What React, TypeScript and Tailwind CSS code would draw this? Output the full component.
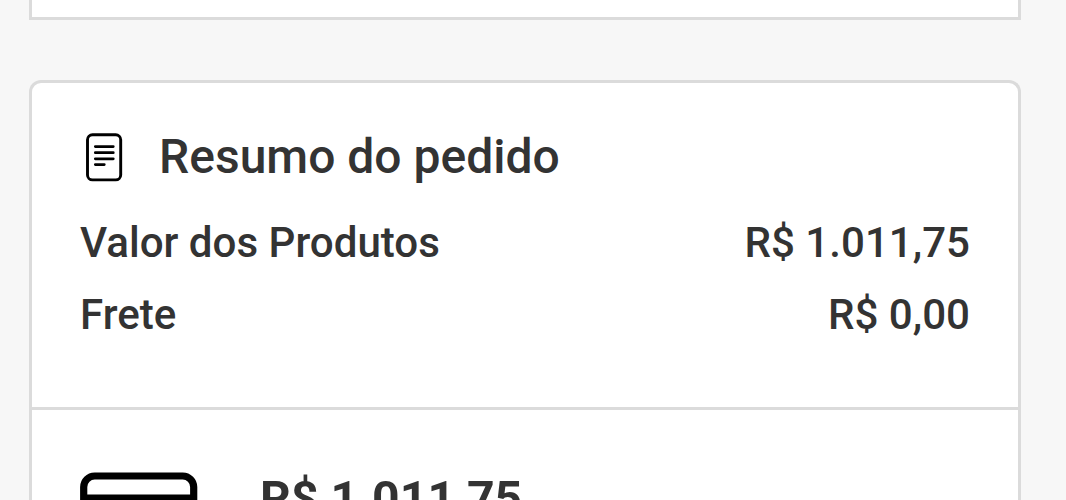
import type React from "react";

interface SummaryRowProps {
  label: string;
  value: string;
}

const SummaryRow: React.FC<SummaryRowProps> = ({ label, value }) => {
  return (
    <div className="flex h-[72px] items-center justify-between text-[42.1px] leading-[42px]">
      <span>{label}</span>
      <span>{value}</span>
    </div>
  );
};

const ReceiptIcon: React.FC = () => (
  <svg width="37" height="50" viewBox="0 0 37 50" fill="none" stroke="#000" strokeLinecap="round">
    <rect x="1.5" y="2.7" width="33.2" height="45.2" rx="5" strokeWidth="2.9" />
    <path d="M9.3 14.6h18M9.3 20.7h18M9.3 26.8h18M9.3 32.6h9" strokeWidth="2.7" />
  </svg>
);

const CardIcon: React.FC = () => (
  <svg width="118" height="90" viewBox="0 0 118 90" fill="none" stroke="#000">
    <rect x="3.7" y="4" width="110" height="82" rx="11" strokeWidth="7.2" />
    <path d="M4 26h110" strokeWidth="7.2" />
  </svg>
);

export default function App() {
  return (
    <div className="flex h-[500px] flex-col overflow-hidden bg-[#f7f7f7] pr-[45px] pl-[29px] font-['Roboto',sans-serif] font-medium text-[#333]">
      <div className="h-5 shrink-0 border-[3px] border-t-0 border-[#dbdbdb] bg-white" />

      <div className="mt-[60px] shrink-0 rounded-t-xl border-[3px] border-b-0 border-[#dbdbdb] bg-white">
        {/* Order summary */}
        <div className="h-[327px] border-b-[3px] border-[#dbdbdb] px-12 pt-[49px]">
          <div className="flex h-[50px] items-center pl-[6px]">
            <ReceiptIcon />
            <h2 className="ml-9 text-[48px] leading-none">Resumo do pedido</h2>
          </div>
          <div className="mt-[25px]">
            <SummaryRow label="Valor dos Produtos" value="R$ 1.011,75" />
            <SummaryRow label="Frete" value="R$ 0,00" />
          </div>
        </div>

        {/* Payment */}
        <div className="flex h-[200px] items-start px-12 pt-[62px]">
          <CardIcon />
          <span className="mt-[3px] ml-[62px] text-[48.2px] leading-[48px] font-bold">R$ 1.011,75</span>
        </div>
      </div>
    </div>
  );
}
